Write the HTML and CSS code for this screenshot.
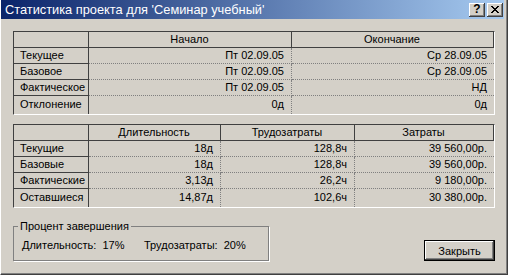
FILE: index.html
```html
<!DOCTYPE html>
<html lang="ru">
<head>
    <meta charset="UTF-8">
    <title>Статистика проекта</title>
    <link rel="stylesheet" href="styles.css">
</head>
<body>

    <div class="window">
        <div class="titlebar">
            <span class="title">Статистика проекта для 'Семинар учебный'</span>
            <div class="caption-buttons">
                <span class="cap-btn help">?</span>
                <span class="cap-btn close">
                    <svg width="8" height="7" viewBox="0 0 8 7" shape-rendering="crispEdges">
                        <path d="M0 0h2v1h-2z M6 0h2v1h-2z M1 1h2v1h-2z M5 1h2v1h-2z M2 2h4v1h-4z M3 3h2v1h-2z M2 4h4v1h-4z M1 5h2v1h-2z M5 5h2v1h-2z M0 6h2v1h-2z M6 6h2v1h-2z" fill="#000"/>
                    </svg>
                </span>
            </div>
        </div>

        <div class="content">
            <!-- даты -->
            <div class="grid">
                <table class="dates">
                    <tr>
                        <th class="corner"></th>
                        <th class="c-start">Начало</th>
                        <th class="c-end last">Окончание</th>
                    </tr>
                    <tr>
                        <td class="rowhead">Текущее</td>
                        <td>Пт 02.09.05</td>
                        <td class="last">Ср 28.09.05</td>
                    </tr>
                    <tr>
                        <td class="rowhead">Базовое</td>
                        <td>Пт 02.09.05</td>
                        <td class="last">Ср 28.09.05</td>
                    </tr>
                    <tr>
                        <td class="rowhead">Фактическое</td>
                        <td>Пт 02.09.05</td>
                        <td class="last">НД</td>
                    </tr>
                    <tr class="final">
                        <td class="rowhead">Отклонение</td>
                        <td>0д</td>
                        <td class="last">0д</td>
                    </tr>
                </table>
            </div>

            <!-- длительность и затраты -->
            <div class="grid second">
                <table class="costs">
                    <tr>
                        <th class="corner"></th>
                        <th class="c-dur">Длительность</th>
                        <th class="c-work">Трудозатраты</th>
                        <th class="c-cost last">Затраты</th>
                    </tr>
                    <tr>
                        <td class="rowhead">Текущие</td>
                        <td>18д</td>
                        <td>128,8ч</td>
                        <td class="last">39 560,00р.</td>
                    </tr>
                    <tr>
                        <td class="rowhead">Базовые</td>
                        <td>18д</td>
                        <td>128,8ч</td>
                        <td class="last">39 560,00р.</td>
                    </tr>
                    <tr>
                        <td class="rowhead">Фактические</td>
                        <td>3,13д</td>
                        <td>26,2ч</td>
                        <td class="last">9 180,00р.</td>
                    </tr>
                    <tr class="final">
                        <td class="rowhead">Оставшиеся</td>
                        <td>14,87д</td>
                        <td>102,6ч</td>
                        <td class="last">30 380,00р.</td>
                    </tr>
                </table>
            </div>

            <div class="footer">
                <fieldset class="progress">
                    <legend>Процент завершения</legend>
                    <div class="progress-row">
                        <span class="p-dur">Длительность:&nbsp; 17%</span>
                        <span>Трудозатраты:&nbsp; 20%</span>
                    </div>
                </fieldset>
                <button class="btn">Закрыть</button>
            </div>
        </div>
    </div>

</body>
</html>
```

FILE: styles.css
```css
* {
    margin: 0;
    padding: 0;
    box-sizing: border-box;
}
body {
    width: 508px;
    height: 275px;
    background: #D4D0C8;
    font-family: 'Liberation Sans', Arial, sans-serif;
    font-size: 11px;
    color: #000;
    overflow: hidden;
}
.window {
    width: 508px;
    height: 275px;
    background: #D4D0C8;
    border-left: 1px solid #fff;
    border-right: 1px solid #404040;
    border-bottom: 1px solid #404040;
    box-shadow: inset -1px -1px 0 #808080;
    padding: 0 3px 3px 0;
    display: flex;
    flex-direction: column;
}
.titlebar {
    height: 19px;
    background: linear-gradient(to right, #0A246A, #A6CAF0);
    display: flex;
    align-items: center;
    justify-content: space-between;
    padding: 0 1px 0 4px;
}
.title {
    color: #fff;
    font-size: 12.8px;
    white-space: nowrap;
}
.caption-buttons {
    display: flex;
    gap: 2px;
}
.cap-btn {
    width: 16px;
    height: 14px;
    background: #D4D0C8;
    box-shadow: inset -1px -1px 0 #404040, inset 1px 1px 0 #fff, inset -2px -2px 0 #808080;
    display: flex;
    align-items: center;
    justify-content: center;
}
.help {
    font-weight: bold;
    font-size: 12px;
    line-height: 12px;
    padding-bottom: 1px;
}
.close svg {
    display: block;
    margin-bottom: 1px;
}
.content {
    padding: 12px 0 0 12px;
}

/* таблицы */
.grid {
    width: 482px;
    border-style: solid;
    border-width: 1px;
    border-color: #404040 #fff #fff #404040;
}
.grid.second {
    margin-top: 9px;
}
table {
    width: 100%;
    border-collapse: separate;
    border-spacing: 0;
    table-layout: fixed;
}
th, td {
    font-weight: normal;
    line-height: 15px;
    white-space: nowrap;
    overflow: hidden;
    padding: 0 7px 0 6px;
    border-right: 1px dotted #808080;
    border-bottom: 1px dotted #808080;
    text-align: right;
}
th {
    text-align: center;
    border-right: 1px solid #404040;
    border-bottom: 1px solid #404040;
}
td.rowhead {
    text-align: left;
    border-right: 1px solid #404040;
    border-bottom: 1px solid #404040;
}
td.last {
    border-right: none;
}
.final td {
    border-bottom: none;
    line-height: 16px;
    padding-bottom: 2px;
}
.corner {
    width: 75px;
}
.c-start {
    width: 203px;
}
.c-dur {
    width: 132px;
}
.c-work {
    width: 134px;
}

/* нижняя часть */
.footer {
    width: 482px;
    margin-top: 12px;
    display: flex;
    justify-content: space-between;
    align-items: flex-end;
}
.progress {
    width: 256px;
    border: 1px solid #808080;
    box-shadow: 1px 1px 0 #fff;
    padding: 0 0 8px 4px;
}
.progress legend {
    padding: 0 2px;
    line-height: 13px;
}
.progress-row {
    display: flex;
    padding: 6px 0 0 4px;
    line-height: 13px;
}
.p-dur {
    width: 122px;
}
.btn {
    width: 71px;
    height: 21px;
    background: #D4D0C8;
    border: 1px solid #000;
    box-shadow: inset -1px -1px 0 #404040, inset 1px 1px 0 #fff, inset -2px -2px 0 #808080;
    font-family: 'Liberation Sans', Arial, sans-serif;
    font-size: 11px;
    color: #000;
    cursor: pointer;
}
```
